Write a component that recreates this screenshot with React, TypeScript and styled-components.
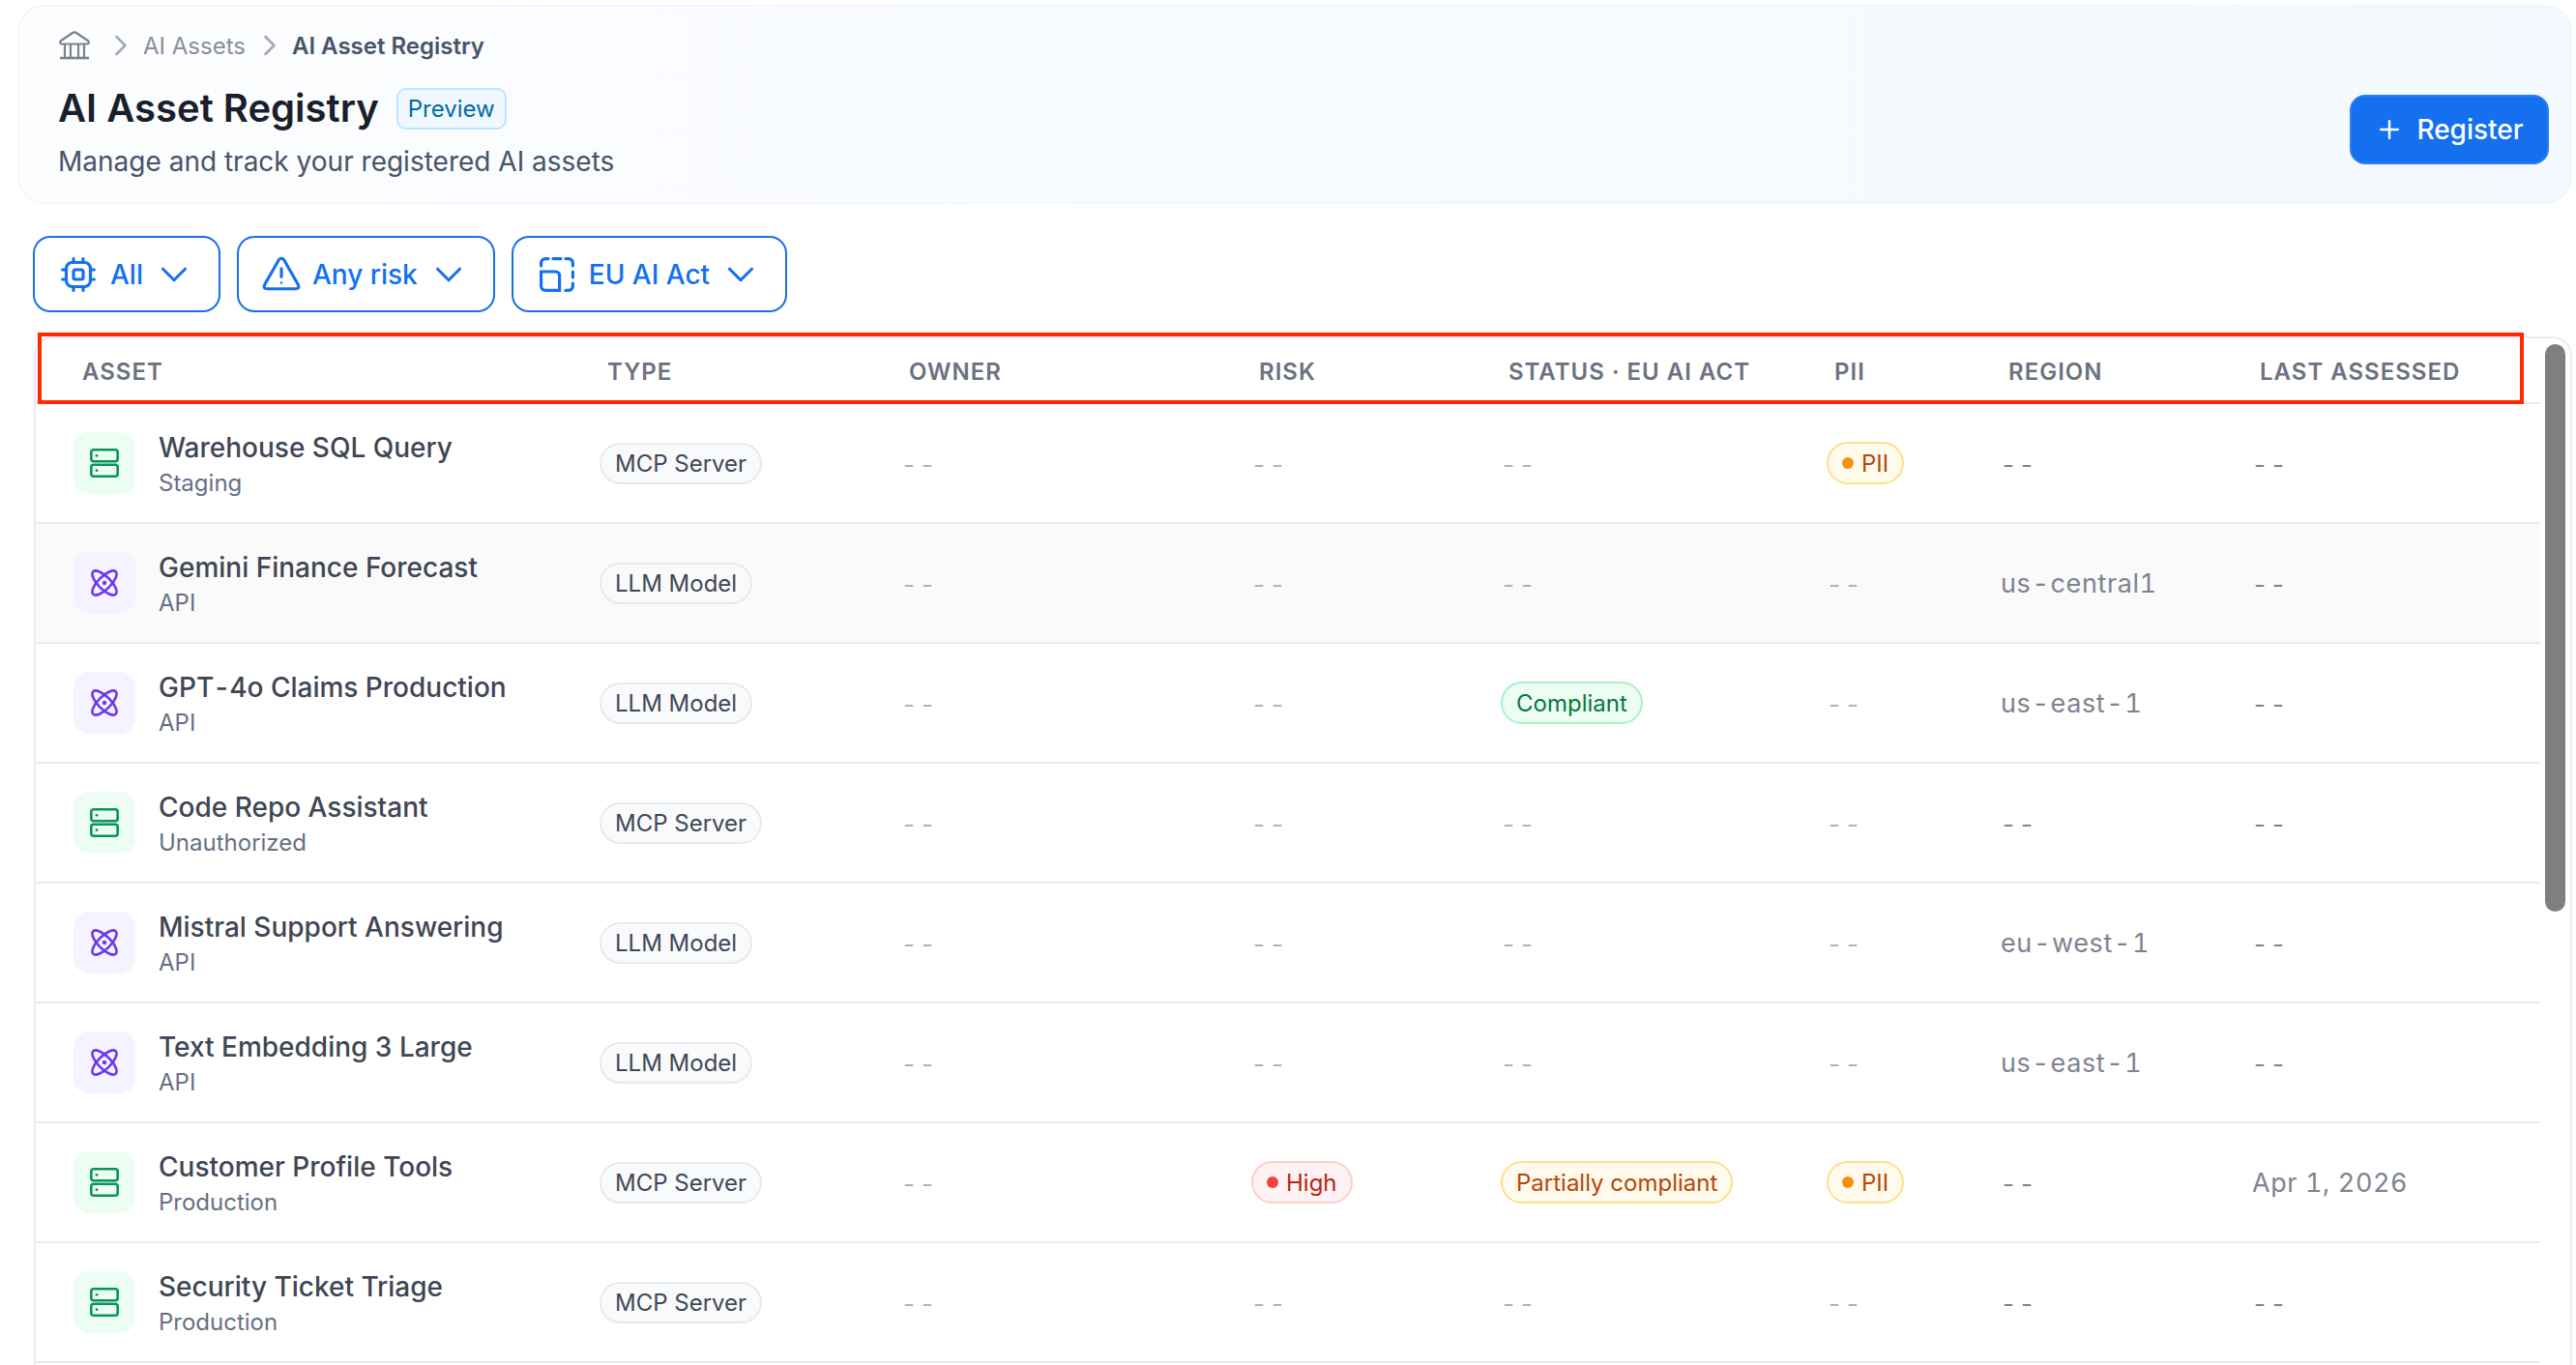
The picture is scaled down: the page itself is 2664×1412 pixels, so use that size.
import React from 'react'
import styled, { createGlobalStyle } from 'styled-components'
import { Plus, ChevronDown, ChevronRight } from 'lucide-react'

const GlobalStyle = createGlobalStyle`
  html, body {
    margin: 0;
    height: 100%;
    background: #ffffff;
    overflow: hidden;
  }
  * { box-sizing: border-box; }
`;

const Page = styled.div`
  height: 1412px;
  padding: 5px 4px 0 18px;
  font-family: Inter, "Noto Sans", sans-serif;
  display: flex;
  flex-direction: column;
  overflow: hidden;
`;

const Hero = styled.header`
  height: 206px;
  flex: none;
  padding: 0 22px 39px 40px;
  border: 2px solid #f3f6fb;
  border-radius: 28px;
  background: linear-gradient(90deg, #fcfdff 0%, #f3f9fe 100%);
  display: flex;
  justify-content: space-between;
  align-items: flex-end;
`;

const HeroText = styled.div`
  display: flex;
  flex-direction: column;
  margin-bottom: -17px;
`;

const Crumbs = styled.nav`
  display: flex;
  align-items: center;
  height: 36px;
  font-size: 24px;
  color: #8a8f9a;
`;

const CrumbSep = styled.span`
  display: flex;
  color: #a3a8b2;
  margin: 0 5px 0 7px;
`;

const CrumbCurrent = styled.span`
  font-weight: 600;
  color: #475467;
`;

const TitleRow = styled.div`
  display: flex;
  align-items: center;
  gap: 18px;
  margin-top: 23px;
`;

const Title = styled.h1`
  margin: 0;
  font-size: 40px;
  line-height: 48px;
  font-weight: 600;
  color: #1a1f2b;
`;

const PreviewTag = styled.span`
  height: 43px;
  padding: 0 10px;
  display: flex;
  align-items: center;
  font-size: 24px;
  color: #026aa2;
  background: #eff8ff;
  border: 2px solid #b9e6fe;
  border-radius: 10px;
`;

const Subtitle = styled.p`
  margin: 11px 0 0;
  font-size: 28px;
  line-height: 40px;
  color: #475467;
`;

const RegisterButton = styled.button`
  width: 206px;
  height: 72px;
  display: flex;
  align-items: center;
  justify-content: center;
  gap: 13px;
  border: 2px solid #2b7ef2;
  border-radius: 16px;
  background: #1570ef;
  color: #ffffff;
  font: 500 28px Inter, sans-serif;
`;

const Filters = styled.div`
  display: flex;
  gap: 17px;
  margin: 33px 0 25px 16px;
  flex: none;
`;

const FilterButton = styled.button`
  height: 79px;
  padding: 0 23px 0 27px;
  display: flex;
  align-items: center;
  gap: 15px;
  background: #ffffff;
  border: 2.5px solid #1a6fe8;
  border-radius: 18px;
  color: #1570ef;
  font: 500 28px Inter, sans-serif;
`;

const FilterCaret = styled(ChevronDown)`
  margin-left: -6px;
`;

const TableWrap = styled.div`
  position: relative;
  flex: 1;
  min-height: 0;
  margin-left: 17px;
  border: 2px solid #e9ecf6;
  border-bottom: none;
  border-radius: 20px 20px 0 0;
  display: flex;
`;

const Marker = styled.div`
  position: absolute;
  left: 2px;
  top: -6px;
  width: 2571px;
  height: 74px;
  border: 4px solid #ff2a00;
  pointer-events: none;
`;

const TableBody = styled.div`
  width: 2590px;
  flex: none;
`;

const columns = '583px 312px 362px 258px 337px 180px 260px 298px';

const HeadRow = styled.div`
  display: grid;
  grid-template-columns: ${columns};
  height: 68px;
  align-items: center;
  padding-top: 2px;
  border-bottom: 2px solid #e8e9ec;
`;

const HeadCell = styled.div<{ $first?: boolean }>`
  padding-left: ${({ $first }) => ($first ? '48px' : '8px')};
  font-size: 24px;
  font-weight: 600;
  letter-spacing: 1px;
  color: #6b7280;
`;

const Row = styled.div<{ $shaded?: boolean }>`
  display: grid;
  grid-template-columns: ${columns};
  height: 124px;
  align-items: center;
  background: ${({ $shaded }) => ($shaded ? '#fafafa' : '#ffffff')};
  border-bottom: 2px solid #e8e9ec;
`;

const AssetCell = styled.div`
  display: flex;
  align-items: center;
  padding-left: 39px;
  gap: 24px;
`;

const IconTile = styled.div<{ $kind: 'mcp' | 'llm' }>`
  width: 64px;
  height: 64px;
  border-radius: 16px;
  display: flex;
  align-items: center;
  justify-content: center;
  background: ${({ $kind }) => ($kind === 'mcp' ? '#ecfdf3' : '#f4f3ff')};
`;

const AssetText = styled.div`
  display: flex;
  flex-direction: column;
  gap: 3px;
  padding-top: 2px;
`;

const AssetName = styled.div`
  font-size: 28px;
  line-height: 36px;
  font-weight: 500;
  color: #3f4654;
`;

const AssetSub = styled.div`
  font-size: 24px;
  line-height: 32px;
  color: #667085;
`;

const TypePill = styled.span`
  display: inline-flex;
  align-items: center;
  height: 43px;
  padding: 0 14px;
  font-size: 24px;
  color: #414855;
  background: #f9fafb;
  border: 2px solid #e9eaec;
  border-radius: 22px;
`;

const Empty = styled.span<{ $strong?: boolean }>`
  display: inline-block;
  margin: 2px 0 0 2px;
  font-size: 26px;
  letter-spacing: 7px;
  color: ${({ $strong }) => ($strong ? '#7d8490' : '#aeb2ba')};
`;

const Plain = styled.span`
  font-size: 27px;
  letter-spacing: 0.6px;
  font-variant-numeric: tabular-nums;
  color: #7d8490;
`;

const Hyphen = styled.span<{ $gap: number }>`
  margin: 0 ${({ $gap }) => $gap}px;
`;

const tones = {
  red: { bg: '#fef3f2', line: '#fecdca', text: '#b42318', dot: '#f04438' },
  amber: { bg: '#fffaeb', line: '#fedf89', text: '#b54708', dot: '#f79009' },
  green: { bg: '#ecfdf3', line: '#abefc6', text: '#067647', dot: '#17b26a' },
};

const Badge = styled.span<{ $tone: keyof typeof tones }>`
  display: inline-flex;
  align-items: center;
  gap: 8px;
  height: 44px;
  padding: 0 14px;
  font-size: 24px;
  border-radius: 22px;
  border: 2px solid ${({ $tone }) => tones[$tone].line};
  background: ${({ $tone }) => tones[$tone].bg};
  color: ${({ $tone }) => tones[$tone].text};
`;

const Dot = styled.i<{ $tone: keyof typeof tones }>`
  width: 12px;
  height: 12px;
  border-radius: 50%;
  background: ${({ $tone }) => tones[$tone].dot};
`;

const ScrollTrack = styled.div`
  flex: 1;
  padding: 6px 5px 0 5px;
`;

const ScrollThumb = styled.div`
  height: 587px;
  border-radius: 11px;
  background: #7f7f7f;
`;

const BankIcon = () => (
  <svg width="34" height="32" viewBox="0 0 34 32" fill="none" stroke="#7d828d" strokeWidth="2.2" strokeLinejoin="round">
    <path d="M2.5 11.5 L15 3 Q17 1.6 19 3 L31.5 11.5 Q32.5 14.5 30 14.5 H4 Q1.5 14.5 2.5 11.5 Z" />
    <path d="M7 14.5V28M13 14.5V28M21 14.5V28M27 14.5V28" />
    <path d="M2 29H32" strokeWidth="2.6" />
  </svg>
);

const ChipIcon = () => (
  <svg width="36" height="36" viewBox="0 0 36 36" fill="none" stroke="#1570ef" strokeWidth="3.2" strokeLinecap="round">
    <rect x="5.5" y="5.5" width="25" height="25" rx="6" />
    <rect x="13" y="13" width="10" height="10" rx="2" />
    <path d="M13 1.6V5M23 1.6V5M13 31V34.4M23 31V34.4M1.6 13H5M1.6 23H5M31 13H34.4M31 23H34.4" />
  </svg>
);

const WarnIcon = () => (
  <svg width="40" height="36" viewBox="0 0 38 34" fill="none" stroke="#1570ef" strokeWidth="3" strokeLinecap="round" strokeLinejoin="round" style={{ margin: '-2px -3px 0 -3px' }}>
    <path d="M16.5 3.5 Q19 0.5 21.5 3.5 L35.5 28 Q37 32 33 32 H5 Q1 32 2.5 28 Z" />
    <path d="M19 12V20" />
    <circle cx="19" cy="26" r="1.2" fill="#1570ef" stroke="none" />
  </svg>
);

const ScanIcon = () => (
  <svg width="36" height="36" viewBox="0 0 36 36" fill="none" stroke="#1570ef" strokeWidth="3.2" strokeLinecap="round">
    <path d="M1.6 9V6a4.4 4.4 0 0 1 4.4-4.4h3M14 1.6h8M27 1.6h3a4.4 4.4 0 0 1 4.4 4.4v3M34.4 15v6M34.4 27v3a4.4 4.4 0 0 1-4.4 4.4h-3" />
    <path d="M1.6 15h15a4 4 0 0 1 4 4v15.4H6a4.4 4.4 0 0 1-4.4-4.4Z" />
  </svg>
);

const ServerIcon = () => (
  <svg width="30" height="30" viewBox="0 0 30 30" fill="none" stroke="#079455" strokeWidth="2.6">
    <rect x="1.3" y="1.3" width="27.4" height="12" rx="2.5" />
    <rect x="1.3" y="16.7" width="27.4" height="12" rx="2.5" />
    <circle cx="7" cy="7.3" r="1.4" fill="#079455" stroke="none" />
    <circle cx="7" cy="22.7" r="1.4" fill="#079455" stroke="none" />
  </svg>
);

const AtomIcon = () => (
  <svg width="28" height="28" viewBox="0 0 28 28" fill="none" stroke="#6938ef" strokeWidth="2.6">
    <ellipse cx="14" cy="14" rx="6.5" ry="16.5" transform="rotate(-45 14 14)" />
    <ellipse cx="14" cy="14" rx="6.5" ry="16.5" transform="rotate(45 14 14)" />
    <circle cx="14" cy="14" r="2.2" fill="#6938ef" stroke="none" />
  </svg>
);

// hyphens sit wider in the source font than in the installed Inter
const spaced = (text: string, gap: number) =>
  text.split('-').map((part, i) => (
    <React.Fragment key={i}>
      {i > 0 && <Hyphen $gap={gap}>-</Hyphen>}
      {part}
    </React.Fragment>
  ));

type Asset = {
  name: string;
  sub: string;
  kind: 'mcp' | 'llm';
  risk?: boolean;
  status?: string;
  pii?: boolean;
  region?: string;
  assessed?: string;
};

const assets: Asset[] = [
  { name: 'Warehouse SQL Query', sub: 'Staging', kind: 'mcp', pii: true },
  { name: 'Gemini Finance Forecast', sub: 'API', kind: 'llm', region: 'us-central1' },
  { name: 'GPT-4o Claims Production', sub: 'API', kind: 'llm', status: 'Compliant', region: 'us-east-1' },
  { name: 'Code Repo Assistant', sub: 'Unauthorized', kind: 'mcp' },
  { name: 'Mistral Support Answering', sub: 'API', kind: 'llm', region: 'eu-west-1' },
  { name: 'Text Embedding 3 Large', sub: 'API', kind: 'llm', region: 'us-east-1' },
  { name: 'Customer Profile Tools', sub: 'Production', kind: 'mcp', risk: true, status: 'Partially compliant', pii: true, assessed: 'Apr 1, 2026' },
  { name: 'Security Ticket Triage', sub: 'Production', kind: 'mcp' },
];

const heads = ['OWNER', 'RISK', 'STATUS · EU AI ACT', 'PII', 'REGION', 'LAST ASSESSED'];

const App = () => {
  return (
    <Page>
      <GlobalStyle />
      <Hero>
        <HeroText>
          <Crumbs>
            <BankIcon />
            <CrumbSep><ChevronRight size={36} strokeWidth={1.7} style={{ marginLeft: 6 }} /></CrumbSep>
            AI Assets
            <CrumbSep><ChevronRight size={36} strokeWidth={1.7} /></CrumbSep>
            <CrumbCurrent>AI Asset Registry</CrumbCurrent>
          </Crumbs>
          <TitleRow>
            <Title>AI Asset Registry</Title>
            <PreviewTag>Preview</PreviewTag>
          </TitleRow>
          <Subtitle>Manage and track your registered AI assets</Subtitle>
        </HeroText>
        <RegisterButton>
          <Plus size={30} strokeWidth={2} />
          Register
        </RegisterButton>
      </Hero>

      <Filters>
        <FilterButton>
          <ChipIcon />
          All
          <FilterCaret size={46} strokeWidth={1.6} />
        </FilterButton>
        <FilterButton>
          <WarnIcon />
          Any risk
          <FilterCaret size={46} strokeWidth={1.6} />
        </FilterButton>
        <FilterButton>
          <ScanIcon />
          EU AI Act
          <FilterCaret size={46} strokeWidth={1.6} />
        </FilterButton>
      </Filters>

      <TableWrap>
        <Marker />
        <TableBody>
          <HeadRow>
            <HeadCell $first>ASSET</HeadCell>
            <HeadCell>TYPE</HeadCell>
            {heads.map((h) => (
              <HeadCell key={h}>{h}</HeadCell>
            ))}
          </HeadRow>
          {assets.map((a, i) => (
            <Row key={a.name} $shaded={i === 1}>
              <AssetCell>
                <IconTile $kind={a.kind}>
                  {a.kind === 'mcp' ? <ServerIcon /> : <AtomIcon />}
                </IconTile>
                <AssetText>
                  <AssetName>{spaced(a.name, 1.5)}</AssetName>
                  <AssetSub>{a.sub}</AssetSub>
                </AssetText>
              </AssetCell>
              <div>
                <TypePill>{a.kind === 'mcp' ? 'MCP Server' : 'LLM Model'}</TypePill>
              </div>
              <div><Empty>--</Empty></div>
              <div>
                {a.risk ? <Badge $tone="red"><Dot $tone="red" />High</Badge> : <Empty>--</Empty>}
              </div>
              <div>
                {a.status ? (
                  <Badge $tone={a.status === 'Compliant' ? 'green' : 'amber'}>{a.status}</Badge>
                ) : (
                  <Empty>--</Empty>
                )}
              </div>
              <div>
                {a.pii ? <Badge $tone="amber"><Dot $tone="amber" />PII</Badge> : <Empty>--</Empty>}
              </div>
              <div>
                {a.region ? <Plain>{spaced(a.region, 1)}</Plain> : <Empty $strong>--</Empty>}
              </div>
              <div>
                {a.assessed ? <Plain>{a.assessed}</Plain> : <Empty $strong>--</Empty>}
              </div>
            </Row>
          ))}
        </TableBody>
        <ScrollTrack>
          <ScrollThumb />
        </ScrollTrack>
      </TableWrap>
    </Page>
  )
}

export default App
